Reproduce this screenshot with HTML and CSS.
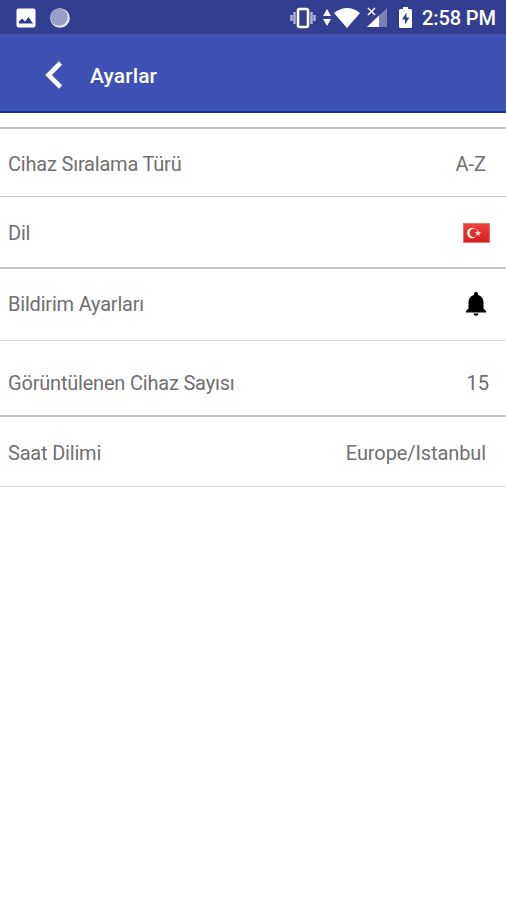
FILE: index.html
```html
<!DOCTYPE html>
<html lang="tr">
<head>
<meta charset="utf-8">
<title>Ayarlar</title>
<link rel="stylesheet" href="styles.css">
</head>
<body>
<header>
  <div class="status">
    <svg class="photo" width="20" height="20" viewBox="0 0 20 20"><rect x=".5" y=".5" width="19" height="19" rx="2" fill="#fff"/><path d="M3 15.500v-2l3-3 3 3 3.500-4.500 4.500 6.500z" fill="#303f8f"/></svg>
    <svg class="moon" width="20" height="20" viewBox="0 0 20 20"><circle cx="10" cy="10" r="9.800" fill="#e4e8f7"/><circle cx="9" cy="9" r="8.800" fill="#98a0ca"/></svg>
    <span class="space"></span>
    <svg class="vibrate" width="26" height="22" viewBox="0 0 26 22"><path d="M1.500 8v6M24.500 8v6M4.500 5v12M21.500 5v12" stroke="#a9b1d8" stroke-width="2.500"/><rect x="8" y="2" width="10" height="18" rx="1.500" fill="none" stroke="#fff" stroke-width="2.600"/></svg>
    <svg class="data" width="8" height="17" viewBox="0 0 8 17"><path d="M4 0l4 7H0zM4 17l4-7H0z" fill="#fff"/></svg>
    <svg class="wifi" width="26" height="20" viewBox="0 0 26 20"><path d="M0 5Q13-5 26 5L13 20z" fill="#fff"/></svg>
    <svg class="signal" width="20" height="21" viewBox="0 0 20 21"><path d="M20 1v19H0z" fill="#7680b7"/><path d="M12 8.600v11.400H0z" fill="#fff"/><path d="M1 1l7 7M8 1L1 8" stroke="#323f91" stroke-width="3.500"/><path d="M1 1l7 7M8 1L1 8" stroke="#fff" stroke-width="1.600"/></svg>
    <svg class="battery" width="13" height="21" viewBox="0 0 13 21"><path d="M4 0h5v2h2.500q1.500 0 1.500 1.500v16q0 1.500-1.500 1.500h-10Q0 21 0 19.500v-16Q0 2 1.500 2H4z" fill="#fff"/><path d="M7.500 5.500L3 12.500h3v5l4.300-7H7.500z" fill="#303f8f"/></svg>
    <span class="clock">2:58 PM</span>
  </div>
  <div class="appbar">
    <svg class="back" width="18" height="28" viewBox="0 0 18 28"><path d="M15.500 2L3.500 14l12 12" fill="none" stroke="#fff" stroke-width="4.600"/></svg>
    <h1>Ayarlar</h1>
  </div>
</header>
<main>
  <div class="row sort"><span class="label">Cihaz Sıralama Türü</span><span>A-Z</span></div>
  <div class="row lang"><span class="label">Dil</span>
    <svg class="flag" width="27" height="20" viewBox="0 0 28 20" preserveAspectRatio="none"><defs><linearGradient id="red" x2="0" y2="1"><stop stop-color="#ee443c"/><stop offset="1" stop-color="#d91f22"/></linearGradient></defs><rect x=".5" y=".5" width="27" height="19" fill="url(#red)" stroke="#e07470"/><circle cx="9.500" cy="10" r="5.200" fill="#fff"/><circle cx="11" cy="10" r="4.200" fill="#e3312e"/><path d="M15.500 7l.9 2.100 2.400.2-1.800 1.500.5 2.300-2-1.300-2 1.300.5-2.300-1.700-1.500 2.300-.2z" fill="#fbdcdc"/></svg>
  </div>
  <div class="row notify"><span class="label">Bildirim Ayarları</span>
    <svg class="bell" width="20" height="24" viewBox="0 0 20 24"><path d="M10 0c1.300 0 2 .8 2 2v1c3.400 1 5.500 3.800 5.500 7.500v6L20 19v1.500H0V19l2.500-2.500v-6C2.500 6.800 4.600 4 8 3V2c0-1.200.7-2 2-2zM7.500 21.500h5a2.500 2.300 0 0 1-5 0z"/></svg>
  </div>
  <div class="row count"><span class="label">Görüntülenen Cihaz Sayısı</span><span>15</span></div>
  <div class="row zone"><span class="label">Saat Dilimi</span><span class="timezone">Europe/Istanbul</span></div>
</main>
</body>
</html>
```
FILE: styles.css
```css
* { box-sizing: border-box; }
body { margin: 0; background: #fff; font-family: Roboto, "Liberation Sans", sans-serif; }
svg { display: block; flex: none; }
.status { height: 34px; background: #323f91; display: flex; align-items: center; padding: 1px 11px 0 16px; }
.moon { margin-left: 14px; }
.space { flex: 1; }
.data { margin-left: 7px; }
.wifi { margin-left: 3px; }
.signal { margin-left: 7px; }
.battery { margin-left: 12px; }
.clock { margin-left: 10px; width: 73px; white-space: nowrap; color: #fff; font-size: 20px; font-weight: 500; line-height: 24px; letter-spacing: -0.1px; }
.appbar { height: 79px; background: #3f51b5; border-bottom: 2px solid #173391; display: flex; align-items: center; padding: 4px 0 0 45px; }
h1 { margin: 3px 0 0 27px; color: #fff; font-size: 21px; font-weight: 500; line-height: 26px; letter-spacing: 0.1px; }
main { margin-top: 14px; border-top: 2px solid #c3c3c3; }
.row { display: flex; justify-content: space-between; align-items: center; padding: 0 20px 0 8px; color: #707070; font-size: 20px; line-height: 24px; }
.label { letter-spacing: -0.2px; }
.timezone { letter-spacing: -0.1px; }
.sort { height: 68px; padding-top: 2px; border-bottom: 1px solid #cacaca; }
.lang { height: 72px; padding-top: 2px; padding-right: 16px; border-bottom: 2px solid #c3c3c3; }
.notify { height: 72px; padding-bottom: 1px; border-bottom: 1px solid #dcdcdc; }
.count { height: 76px; padding-top: 9px; padding-right: 17px; border-bottom: 2px solid #c3c3c3; }
.zone { height: 70px; padding-top: 2px; border-bottom: 1px solid #d8d8d8; }
```
